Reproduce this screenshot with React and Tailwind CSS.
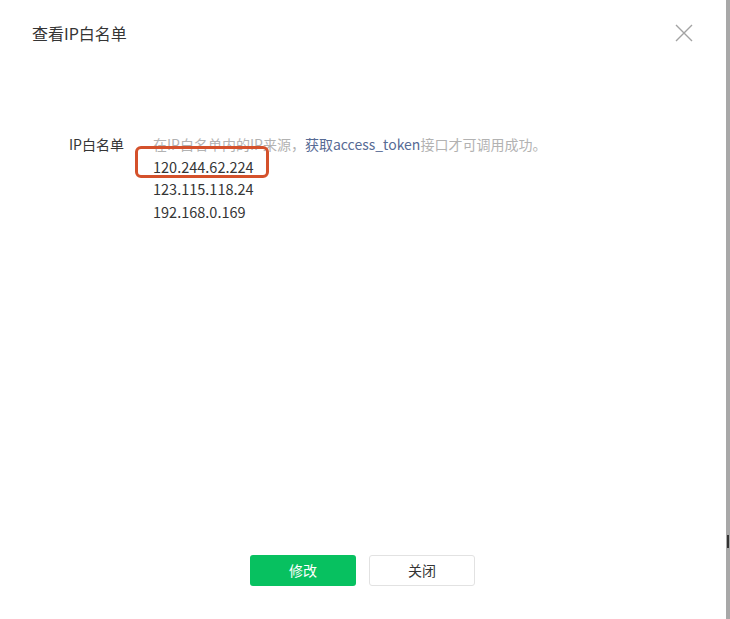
export default function App() {
  const font = { fontFamily: '"Noto Sans CJK SC", "Noto Sans", sans-serif' };
  return (
    <div className="w-[730px] h-[619px] flex bg-white text-[#353535]" style={font}>
      <div className="flex-1 flex flex-col">
        <div className="flex items-start justify-between pl-8 pr-[33px] pt-[21px]">
          <h1 className="text-[16px] leading-[24px] font-normal text-[#353535]">查看IP白名单</h1>
          <button className="mt-[3px] w-[18px] h-[18px] text-[#a3a3a3]">
            <svg viewBox="0 0 18 18" width="18" height="18" fill="none" stroke="currentColor" strokeWidth="1.4">
              <path d="M1 1 L17 17 M17 1 L1 17" />
            </svg>
          </button>
        </div>
        <div className="flex mt-[88px] pl-[69px] text-[14px] leading-[22.5px]">
          <div className="w-[84px] text-[#353535]">IP白名单</div>
          <div className="relative flex flex-col">
            <div className="text-[#b2b2b2]">
              在IP白名单内的IP来源，<span className="text-[#576b95]">获取access_token</span>接口才可调用成功。
            </div>
            <div className="text-[14.5px]">120.244.62.224</div>
            <div className="text-[14.5px]">123.115.118.24</div>
            <div className="text-[14.5px]">192.168.0.169</div>
            <div className="absolute left-[-18px] top-[13px] w-[134px] h-[32px] border-[3px] border-[#d4512b] rounded-[6px] pointer-events-none" />
          </div>
        </div>
        <div className="flex-1" />
        <div className="flex justify-center gap-[13px] pb-[33px] pr-[1px]">
          <button className="w-[106px] h-[31px] rounded-[3px] bg-[#07c160] text-white text-[14px] leading-[31px]">修改</button>
          <button className="w-[106px] h-[31px] rounded-[3px] bg-white border border-[#e2e2e2] text-[#353535] text-[14px] leading-[29px]">关闭</button>
        </div>
      </div>
      <div className="relative w-[4px] bg-[#a8a8a8]">
        <div className="absolute left-[1px] top-[535px] w-[2px] h-[13px] bg-[#333333]" />
      </div>
    </div>
  );
}
